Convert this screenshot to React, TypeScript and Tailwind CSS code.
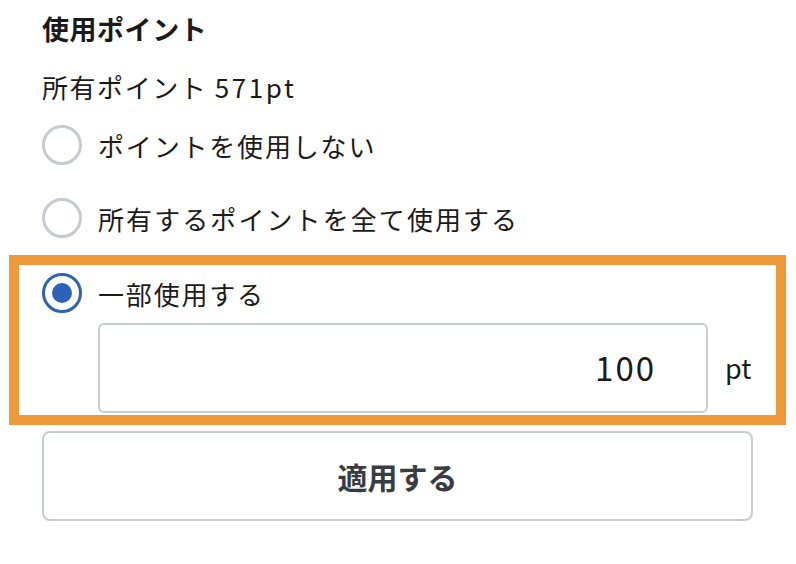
const font = {
  fontFamily: '"Noto Sans CJK JP", "Noto Sans", sans-serif',
};

const Radio = ({ checked }: { checked?: boolean }) =>
  checked ? (
    <span className="w-10 h-10 shrink-0 rounded-full border-[3px] border-[#2d63b7] flex items-center justify-center">
      <span className="w-5 h-5 rounded-full bg-[#2d63b7]" />
    </span>
  ) : (
    <span className="w-10 h-10 shrink-0 rounded-full border-[3px] border-[#c5cad3]" />
  );

export default function App() {
  return (
    <div
      className="w-[796px] h-[564px] bg-white text-[#1c1a18] pl-[42px] pt-[9px]"
      style={font}
    >
      <div className="w-[711px] flex flex-col">
        <h2 className="h-10 leading-10 text-[27px] font-bold tracking-[0.02em]">
          使用ポイント
        </h2>

        <p className="mt-[18px] h-10 leading-10 text-[26px] tracking-[0.06em]">
          所有ポイント <span className="tracking-[0.1em]">571pt</span>
        </p>

        <label className="mt-[18px] flex items-center gap-4 h-10">
          <Radio />
          <span className="text-[26px] tracking-[0.07em]">ポイントを使用しない</span>
        </label>

        <label className="mt-[33px] flex items-center gap-4 h-10">
          <Radio />
          <span className="text-[26px] tracking-[0.08em]">
            所有するポイントを全て使用する
          </span>
        </label>

        <div className="mt-[17px] -ml-[33px] w-[777px] border-[10px] border-[#f0993a] pl-[23px] pr-[23px] pt-2 pb-[2px]">
          <label className="flex items-center gap-4 h-10">
            <Radio checked />
            <span className="text-[26px] tracking-[0.07em]">一部使用する</span>
          </label>
          <div className="mt-[10px] flex items-center">
            <div className="ml-[56px] w-[610px] h-[90px] border-2 border-[#c8ccd5] rounded-md flex items-center justify-end pr-[50px]">
              <span className="text-[33px] tracking-[0.06em]">100</span>
            </div>
            <span className="ml-[17px] text-[27px]">pt</span>
          </div>
        </div>

        <button className="mt-[6px] h-[90px] w-[711px] border-2 border-[#c8ccd5] rounded-lg text-[30px] font-bold text-[#393d42]">
          適用する
        </button>
      </div>
    </div>
  );
}
